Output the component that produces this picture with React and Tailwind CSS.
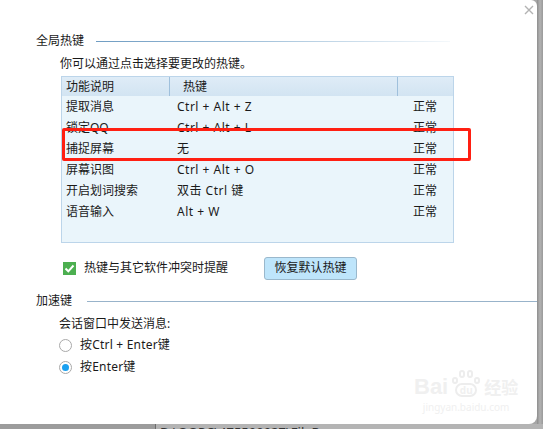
import React from 'react';

const font = { fontFamily: '"Noto Sans", "Noto Sans CJK SC", sans-serif' };

const hotkeys = [
    { name: '提取消息', key: 'Ctrl + Alt + Z', state: '正常' },
    { name: '锁定QQ', key: 'Ctrl + Alt + L', state: '正常' },
    { name: '捕捉屏幕', key: '无', state: '正常' },
    { name: '屏幕识图', key: 'Ctrl + Alt + O', state: '正常' },
    { name: '开启划词搜索', key: '双击 Ctrl 键', state: '正常' },
    { name: '语音输入', key: 'Alt + W', state: '正常' },
];

function SectionTitle({ title, lineClass }) {
    return (
        <div className="flex items-center h-[16px] leading-[16px]">
            <span className="text-[12px] text-[#1a1a1a]">{title}</span>
            <div className={lineClass} />
        </div>
    );
}

function Radio({ checked, label }) {
    return (
        <div className="flex items-center h-[16px] gap-[8px]">
            <div className="w-[13px] h-[13px] rounded-full border border-[#a9a9a9] bg-white flex items-center justify-center">
                {checked && <div className="w-[7px] h-[7px] rounded-full bg-[#1aa0f0]" />}
            </div>
            <span className="text-[12px] leading-[16px] tracking-[0.2px] text-[#1a1a1a]">{label}</span>
        </div>
    );
}

export default function App() {
    return (
        <div className="w-[543px] h-[429px] overflow-hidden bg-[#a6a6a6] flex flex-col" style={font}>
            <div className="flex h-[424px]">
                <div className="relative w-[537px] h-[424px] bg-white rounded-tr-[6px] rounded-br-[8px] pl-[36px] pt-[33px]">
                    {/* close */}
                    <svg className="absolute left-[524px] top-[5px]" width="10" height="10" viewBox="0 0 10 10">
                        <path d="M1 1L9 9M9 1L1 9" stroke="#b3b3b3" strokeWidth="1.4" />
                    </svg>

                    <SectionTitle
                        title="全局热键"
                        lineClass="ml-[12px] w-[354px] h-px bg-gradient-to-r from-[#6f9cc2] via-[#a9c6dd] to-[#f4f8fb]"
                    />

                    <div className="ml-[24px] mt-[7px] text-[12px] leading-[16px] text-[#1a1a1a]">
                        你可以通过点击选择要更改的热键。
                    </div>

                    {/* table */}
                    <div className="ml-[25px] mt-[4px] w-[393px] h-[167px] border border-[#bcd5ea] bg-[#eaf5fb] text-[12px] text-[#1a1a1a]">
                        <div className="flex h-[19px] leading-[19px] bg-gradient-to-b from-[#dfecf7] to-[#d2e4f2]">
                            <div className="w-[108px] pl-[4px] border-r border-[#9fc0dc]">功能说明</div>
                            <div className="w-[228px] pl-[13px] border-r border-[#9fc0dc]">热键</div>
                            <div className="flex-1" />
                        </div>
                        {hotkeys.map((row) => (
                            <div key={row.name} className="flex h-[21px] leading-[21px]">
                                <div className="w-[109px] pl-[4px]">{row.name}</div>
                                <div className="w-[242px] pl-[6px] tracking-[0.5px]">{row.key}</div>
                                <div className="flex-1">{row.state}</div>
                            </div>
                        ))}
                    </div>

                    {/* red annotation */}
                    <div className="absolute left-[62px] top-[128px] w-[409px] h-[33px] border-[3px] border-[#ff1f12] rounded-[2px]" />

                    {/* checkbox + button */}
                    <div className="flex items-center ml-[27px] mt-[13px] h-[24px]">
                        <div className="w-[13px] h-[13px] bg-[#4caf50] flex items-center justify-center">
                            <svg width="11" height="11" viewBox="0 0 11 11">
                                <path d="M1.5 5.5L4.3 8.3L9.5 2.5" stroke="#fff" strokeWidth="2" fill="none" />
                            </svg>
                        </div>
                        <span className="ml-[8px] text-[12px] leading-[16px] text-[#1a1a1a]">热键与其它软件冲突时提醒</span>
                        <button className="ml-[36px] w-[93px] h-[23px] bg-[#bee5fb] border border-[#9ab8cc] rounded-[3px] text-[12px] leading-[16px] text-[#1a1a1a]">
                            恢复默认热键
                        </button>
                    </div>

                    <div className="mt-[13px]">
                        <SectionTitle
                            title="加速键"
                            lineClass="ml-[15px] flex-1 h-px bg-[#98b3ca]"
                        />
                    </div>

                    <div className="ml-[23px] mt-[7px] text-[12px] leading-[16px] text-[#1a1a1a]">
                        会话窗口中发送消息:
                    </div>
                    <div className="ml-[23px] mt-[5px] flex flex-col gap-[6px]">
                        <Radio label="按Ctrl + Enter键" />
                        <Radio checked label="按Enter键" />
                    </div>

                    {/* watermark */}
                    <div className="absolute left-[414px] top-[368px] flex flex-col items-center text-[#f0f0f0]">
                        <div className="flex items-end h-[30px]">
                            <span className="text-[22px] leading-[22px] font-bold" style={{ fontFamily: '"Liberation Sans", sans-serif' }}>Bai</span>
                            <div className="relative w-[32px] h-[28px] mx-[2px]">
                                <div className="absolute left-[9px] top-0 w-[6px] h-[8px] rounded-full border-2 border-[#ededed]" />
                                <div className="absolute left-[17px] top-0 w-[6px] h-[8px] rounded-full border-2 border-[#ededed]" />
                                <div className="absolute left-[2px] top-[7px] w-[6px] h-[7px] rounded-full border-2 border-[#ededed]" />
                                <div className="absolute left-[24px] top-[7px] w-[6px] h-[7px] rounded-full border-2 border-[#ededed]" />
                                <div className="absolute left-[5px] top-[13px] w-[22px] h-[14px] rounded-[7px] border-2 border-[#ededed] text-[10px] leading-[10px] text-center font-bold">du</div>
                            </div>
                            <span className="text-[17px] leading-[20px] font-bold">经验</span>
                        </div>
                        <span className="text-[10px] leading-[14px] mt-[2px]">jingyan.baidu.com</span>
                    </div>
                </div>
                <div className="flex-1 bg-gradient-to-r from-[#8e8e8e] via-[#b3b3b3] to-[#9a9a9a]" />
            </div>
            <div className="flex h-[5px]">
                <div className="w-[156px] bg-[#9c9c9c] border-r border-[#6d6d6d]" />
                <div className="flex-1 bg-[#b4b4b4] overflow-hidden">
                    <div className="pl-[4px] text-[13px] leading-[16px] text-[#333]">D:\QQPC\475599927\FileRecv</div>
                </div>
            </div>
        </div>
    );
}
